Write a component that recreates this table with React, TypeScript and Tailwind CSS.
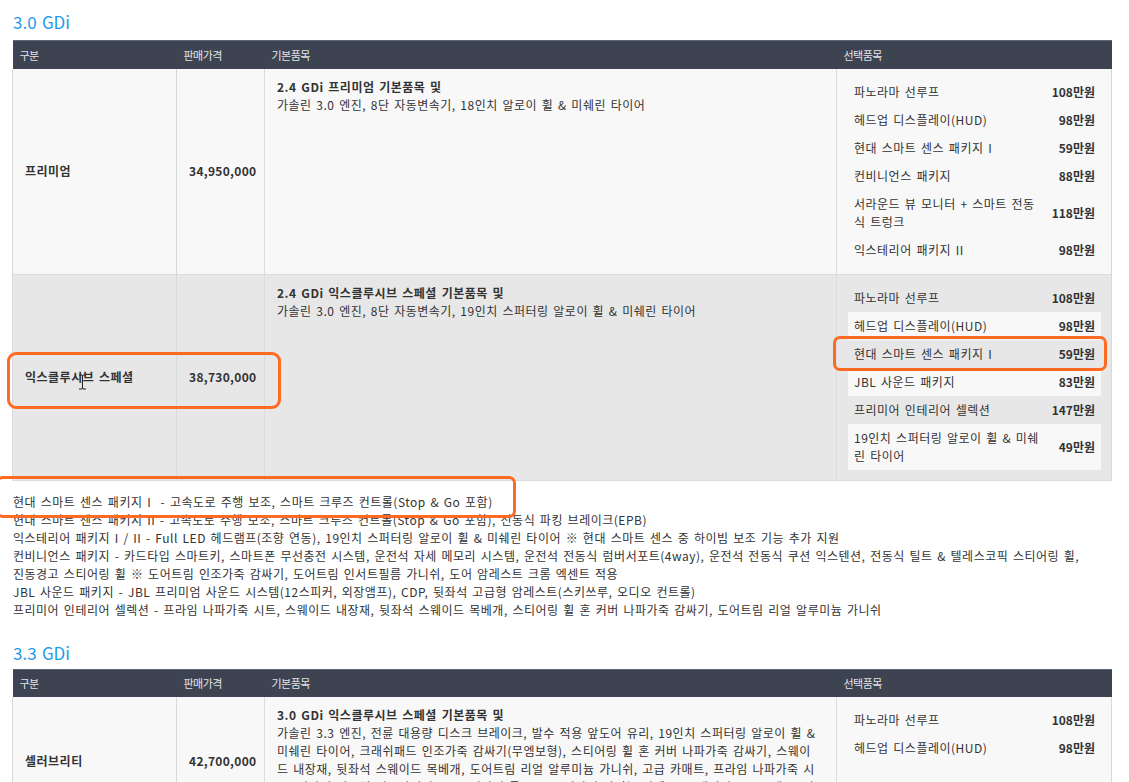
import React from 'react'

interface Option {
  name: string
  price: string
}

interface Row {
  name: string
  price: string
  title: string
  desc: string
  bg: string
  options: Option[]
}

const rows30: Row[] = [
  {
    name: '프리미엄',
    price: '34,950,000',
    title: '2.4 GDi 프리미엄 기본품목 및',
    desc: '가솔린 3.0 엔진, 8단 자동변속기, 18인치 알로이 휠 & 미쉐린 타이어',
    bg: 'bg-[#f8f8f8]',
    options: [
      { name: '파노라마 선루프', price: '108만원' },
      { name: '헤드업 디스플레이(HUD)', price: '98만원' },
      { name: '현대 스마트 센스 패키지 I', price: '59만원' },
      { name: '컨비니언스 패키지', price: '88만원' },
      { name: '서라운드 뷰 모니터 + 스마트 전동식 트렁크', price: '118만원' },
      { name: '익스테리어 패키지 II', price: '98만원' },
    ],
  },
  {
    name: '익스클루시브 스페셜',
    price: '38,730,000',
    title: '2.4 GDi 익스클루시브 스페셜 기본품목 및',
    desc: '가솔린 3.0 엔진, 8단 자동변속기, 19인치 스퍼터링 알로이 휠 & 미쉐린 타이어',
    bg: 'bg-[#e7e7e7]',
    options: [
      { name: '파노라마 선루프', price: '108만원' },
      { name: '헤드업 디스플레이(HUD)', price: '98만원' },
      { name: '현대 스마트 센스 패키지 I', price: '59만원' },
      { name: 'JBL 사운드 패키지', price: '83만원' },
      { name: '프리미어 인테리어 셀렉션', price: '147만원' },
      { name: '19인치 스퍼터링 알로이 휠 & 미쉐린 타이어', price: '49만원' },
    ],
  },
]

const rows33: Row[] = [
  {
    name: '셀러브리티',
    price: '42,700,000',
    title: '3.0 GDi 익스클루시브 스페셜 기본품목 및',
    desc: '가솔린 3.3 엔진, 전륜 대용량 디스크 브레이크, 발수 적용 앞도어 유리, 19인치 스퍼터링 알로이 휠 & 미쉐린 타이어, 크래쉬패드 인조가죽 감싸기(무엠보형), 스티어링 휠 혼 커버 나파가죽 감싸기, 스웨이드 내장재, 뒷좌석 스웨이드 목베개, 도어트림 리얼 알루미늄 가니쉬, 고급 카매트, 프라임 나파가죽 시트, 뒷좌석 전동식 리클라이닝 시트, 뒷좌석 통풍시트, 뒷좌석 다기능 암레스트, 앰비언트 무드램프, 전동식 뒷면 커튼, 뒷좌석 수동식 도어 커튼, 스마트 파워 트렁크, 서라운드 뷰 모니터, 후측방 모니터',
    bg: 'bg-[#f8f8f8]',
    options: [
      { name: '파노라마 선루프', price: '108만원' },
      { name: '헤드업 디스플레이(HUD)', price: '98만원' },
    ],
  },
]

const notes: React.ReactNode[] = [
  '현대 스마트 센스 패키지 I  - 고속도로 주행 보조, 스마트 크루즈 컨트롤(Stop & Go 포함)',
  '현대 스마트 센스 패키지 II - 고속도로 주행 보조, 스마트 크루즈 컨트롤(Stop & Go 포함), 전동식 파킹 브레이크(EPB)',
  '익스테리어 패키지 I / II - Full LED 헤드램프(조향 연동), 19인치 스퍼터링 알로이 휠 & 미쉐린 타이어 ※ 현대 스마트 센스 중 하이빔 보조 기능 추가 지원',
  <>
    컨비니언스 패키지 - 카드타입 스마트키, 스마트폰 무선충전 시스템, 운전석 자세 메모리 시스템, 운전석 전동식 럼버서포트(4way), 운전석 전동식 쿠션 익스텐션, 전동식 틸트 & 텔레스코픽 스티어링 휠,
    <br />
    진동경고 스티어링 휠 ※ 도어트림 인조가죽 감싸기, 도어트림 인서트필름 가니쉬, 도어 암레스트 크롬 엑센트 적용
  </>,
  'JBL 사운드 패키지 - JBL 프리미엄 사운드 시스템(12스피커, 외장앰프), CDP, 뒷좌석 고급형 암레스트(스키쓰루, 오디오 컨트롤)',
  '프리미어 인테리어 셀렉션 - 프라임 나파가죽 시트, 스웨이드 내장재, 뒷좌석 스웨이드 목베개, 스티어링 휠 혼 커버 나파가죽 감싸기, 도어트림 리얼 알루미늄 가니쉬',
]

function PriceTable({ rows }: { rows: Row[] }) {
  return (
    <table className="w-[1099px] table-fixed border-collapse">
      <colgroup>
        <col className="w-[164px]" />
        <col className="w-[88px]" />
        <col className="w-[572px]" />
        <col className="w-[275px]" />
      </colgroup>
      {/* Header */}
      <thead>
        <tr className="h-[28px] bg-[#3d4351] border-t border-[#5c6679]">
          {['구분', '판매가격', '기본품목', '선택품목'].map((h) => (
            <th key={h} className="pl-[7px] text-left align-middle text-[11px] font-normal tracking-[-0.5px] [word-spacing:0] text-[#e2e4e8]">
              {h}
            </th>
          ))}
        </tr>
      </thead>
      <tbody>
        {rows.map((row) => (
          <tr key={row.name} className={`${row.bg} border-b border-[#dcdcdc]`}>
            <td className="border-l border-r border-[#d9d9d9] pl-[12px] align-middle font-bold">{row.name}</td>
            <td className="border-r border-[#dcdcdc] pl-[12px] align-middle font-bold tracking-[0.3px]">{row.price}</td>
            <td className="border-r border-[#dcdcdc] pl-[12px] pr-[16px] pt-[9px] pb-[10px] align-top">
              <p className="font-bold">{row.title}</p>
              <p>{row.desc}</p>
            </td>
            <td className="border-r border-[#d9d9d9] pl-[11px] pr-[10px] pt-[9px] pb-[10px] align-top">
              <ul className="flex flex-col">
                {row.options.map((opt, i) => (
                  <li
                    key={opt.name}
                    className={`flex items-center gap-[4px] px-[6px] py-[5px] ${i % 2 === 1 ? 'bg-[#f8f8f8]' : ''}`}
                  >
                    <span className="flex-1">{opt.name}</span>
                    <span className="w-[52px] shrink-0 text-right font-bold tracking-[0]">{opt.price}</span>
                  </li>
                ))}
              </ul>
            </td>
          </tr>
        ))}
      </tbody>
    </table>
  )
}

export default function App() {
  return (
    <div
      className="relative w-[1129px] h-[782px] overflow-hidden bg-white text-[12px] leading-[18px] tracking-[0.5px] [word-spacing:1.5px] text-[#333]"
      style={{ fontFamily: "'Noto Sans CJK KR', 'Noto Sans', sans-serif" }}
    >
      <div className="pl-[12px] pt-[11px]">
        <h2 className="mb-[7px] pl-[1px] text-[17px] leading-[22px] font-normal tracking-[0] text-[#1e9be8]">3.0 GDi</h2>
        <PriceTable rows={rows30} />

        {/* Notes */}
        <div className="mt-[12px] pl-[1px]">
          {notes.map((n, i) => (
            <p key={i} className="whitespace-pre-wrap">
              {n}
            </p>
          ))}
        </div>

        <h2 className="mt-[23px] mb-[5px] pl-[1px] text-[17px] leading-[22px] font-normal tracking-[0] text-[#1e9be8]">3.3 GDi</h2>
        <PriceTable rows={rows33} />
      </div>

      {/* Highlight annotations */}
      <div className="absolute left-[7px] top-[352px] w-[274px] h-[57px] rounded-[9px] border-[3px] border-[#ff6a22]" />
      <div className="absolute left-[833px] top-[336px] w-[274px] h-[35px] rounded-[7px] border-[3px] border-[#ff6a22]" />
      <div className="absolute left-[-4px] top-[476px] w-[520px] h-[42px] rounded-[7px] border-[3px] border-[#ff6a22]" />

      {/* Text cursor */}
      <svg className="absolute left-[78px] top-[374px]" width="9" height="16" viewBox="0 0 9 16">
        <path d="M1 1h3l0.5 1 0.5-1h3M4.5 2v12M1 15h3l0.5-1 0.5 1h3" stroke="#222" strokeWidth="1" fill="none" />
      </svg>
    </div>
  )
}
